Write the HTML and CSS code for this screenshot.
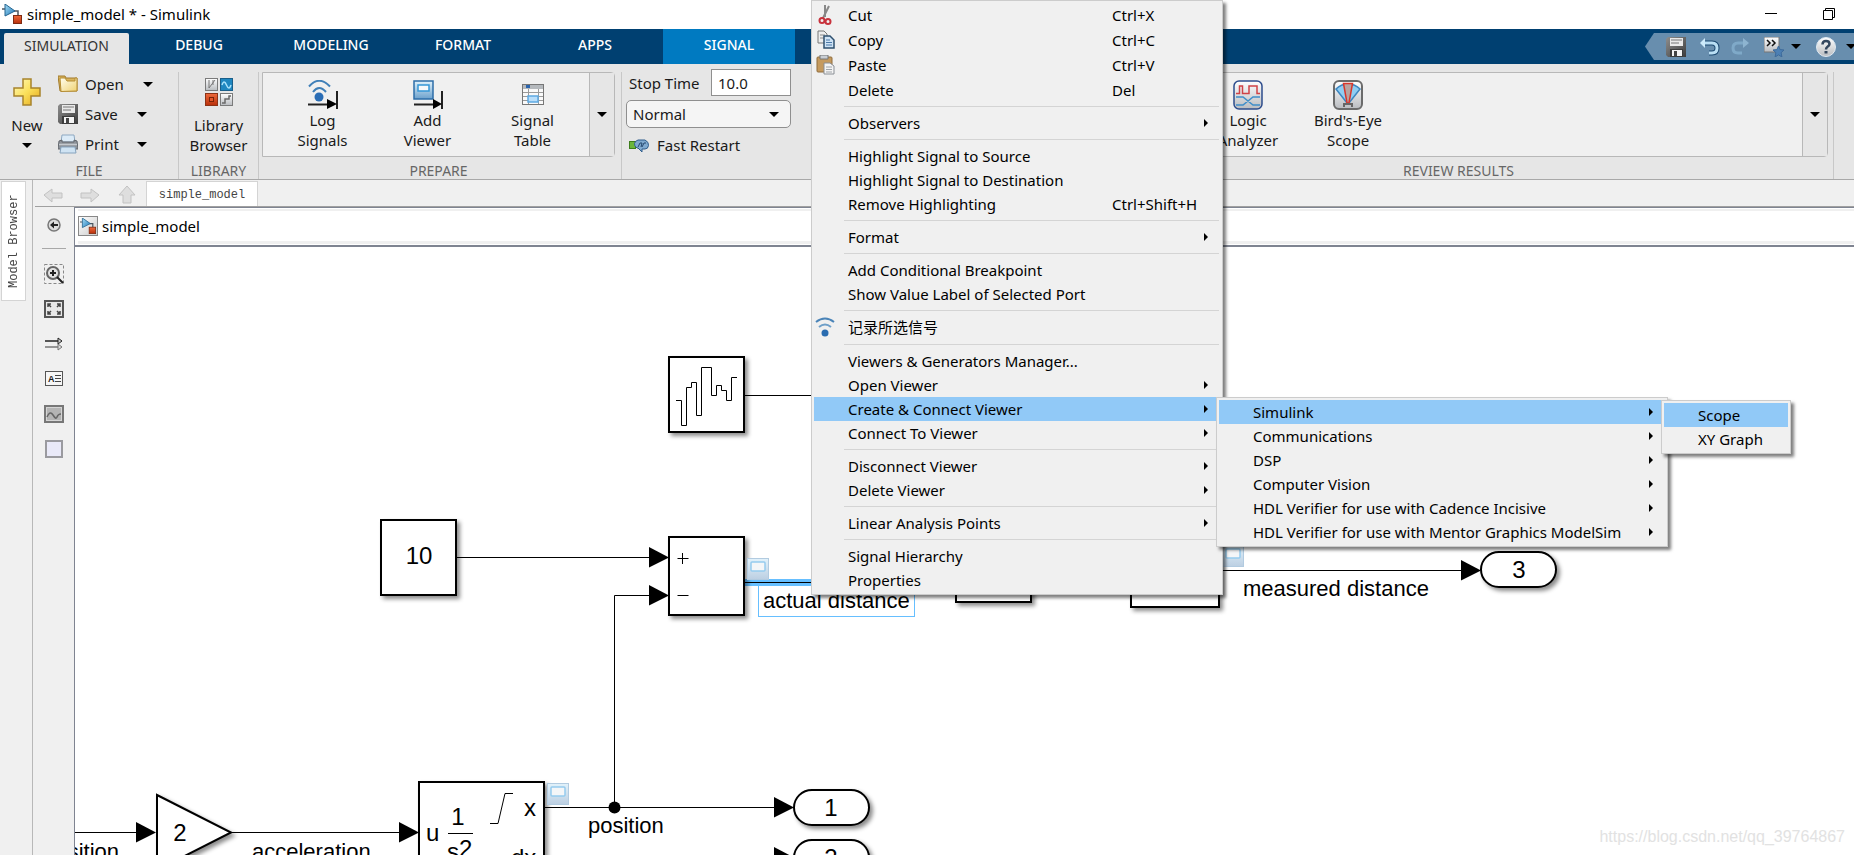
FILE: index.html
```html
<!DOCTYPE html>
<html lang="en">
<head>
<meta charset="utf-8">
<title>simple_model * - Simulink</title>
<link rel="stylesheet" href="styles.css">
</head>
<body>
<svg class="defs" width="0" height="0" aria-hidden="true">
  <defs>
    <linearGradient id="blueG" x1="0" y1="0" x2="1" y2="1"><stop offset="0" stop-color="#a6dcf5"/><stop offset="1" stop-color="#1c78b8"/></linearGradient>
    <linearGradient id="redG" x1="0" y1="0" x2="0" y2="1"><stop offset="0" stop-color="#ee6a3c"/><stop offset="1" stop-color="#b82f0a"/></linearGradient>
    <linearGradient id="goldG" x1="0" y1="0" x2="1" y2="1"><stop offset="0" stop-color="#fffbc0"/><stop offset=".5" stop-color="#fbe05a"/><stop offset="1" stop-color="#e3a51c"/></linearGradient>
    <linearGradient id="folderG" x1="0" y1="0" x2="1" y2="1"><stop offset="0" stop-color="#fffef0"/><stop offset="1" stop-color="#f0d272"/></linearGradient>
    <linearGradient id="greyG" x1="0" y1="0" x2="0" y2="1"><stop offset="0" stop-color="#ffffff"/><stop offset="1" stop-color="#b9bcc0"/></linearGradient>
    <linearGradient id="darkG" x1="0" y1="0" x2="1" y2="1"><stop offset="0" stop-color="#8e8e8e"/><stop offset="1" stop-color="#3c3c3c"/></linearGradient>
    <linearGradient id="paleG" x1="0" y1="0" x2="0" y2="1"><stop offset="0" stop-color="#e2f2fb"/><stop offset="1" stop-color="#bccfe2"/></linearGradient>
    <linearGradient id="viewG" x1="0" y1="0" x2="0" y2="1"><stop offset="0" stop-color="#dff1fb"/><stop offset="1" stop-color="#6ba0cc"/></linearGradient>
    <filter id="shade" x="-20%" y="-20%" width="150%" height="150%"><feDropShadow dx="3" dy="3" stdDeviation="2" flood-color="#000" flood-opacity=".45"/></filter>
    <symbol id="i-save" viewBox="0 0 20 20">
      <path d="M2 0h18v20H2L0 18V2z" fill="url(#darkG)"/>
      <path d="M4 1h13v8H4z" fill="#e9e9e9"/><path d="M5 3h11M5 6h8" stroke="#777"/>
      <path d="M4 12h13v8H4z" fill="#3c3c3c"/><path d="M6 13h10v6H6z" fill="#f4f4f4"/><path d="M8 14h3v5H8z" fill="#444"/>
    </symbol>
    <symbol id="i-model" viewBox="0 0 20 20">
      <path d="M0 5h3M12 7h4v5" fill="none" stroke="#4d565e" stroke-width="1.5"/>
      <path d="M3 0l10 7-10 5z" fill="url(#blueG)" stroke="#24648f"/>
      <rect x="11.500" y="11.500" width="8" height="8" fill="url(#redG)" stroke="#7e2b12"/>
    </symbol>
    <symbol id="i-view" viewBox="0 0 22 22">
      <rect x=".5" y=".5" width="21" height="21" fill="url(#paleG)" stroke="#b2cbe0"/>
      <rect x="4" y="4" width="14" height="9" rx="1" fill="#f4f6f8" stroke="#95cbee" stroke-width="1.500"/>
    </symbol>
    <symbol id="i-wave" viewBox="0 0 20 20">
      <path d="M1 5Q10-2 19 5" fill="none" stroke="#4a84b8" stroke-width="2"/>
      <path d="M4 10Q10 5 16 10" fill="none" stroke="#6e9fc8" stroke-width="2"/>
      <circle cx="10" cy="16" r="3.500" fill="#2a6cb0"/>
    </symbol>
  </defs>
</svg>

<div class="app">
  <header class="titlebar">
    <svg class="title-icon" viewBox="0 0 20 20"><use href="#i-model"/></svg>
    <span class="title">simple_model * - Simulink</span>
    <button class="win" aria-label="Minimize"><svg width="12" height="12"><path d="M0 5.500h12" stroke="#000"/></svg></button>
    <button class="win" aria-label="Restore"><svg width="12" height="12"><path d="M.5 2.500h9v9h-9zM2.500 2.500v-2h9v9h-2" fill="none" stroke="#000"/></svg></button>
  </header>

  <nav class="tabs">
    <button class="tab tab-active">SIMULATION</button>
    <button class="tab">DEBUG</button>
    <button class="tab">MODELING</button>
    <button class="tab">FORMAT</button>
    <button class="tab">APPS</button>
    <button class="tab tab-signal">SIGNAL</button>
    <div class="quick">
      <button class="qa" aria-label="Save"><svg width="20" height="20"><use href="#i-save"/></svg></button>
      <button class="qa qa-undo" aria-label="Undo"><svg width="20" height="20" viewBox="0 0 20 20"><path d="M3 6h9q5 0 5 5t-5 5H9" fill="none" stroke="#1d4a72" stroke-width="5"/><path d="M3 6h9q5 0 5 5t-5 5H9" fill="none" stroke="#b9def4" stroke-width="3"/><path d="M0 6l5-5v10z" fill="#cdeafa"/></svg></button>
      <button class="qa" aria-label="Redo"><svg width="20" height="20" viewBox="0 0 20 20"><path d="M16 6H8q-5 0-5 5t5 5h4" fill="none" stroke="#7fa9c8" stroke-width="3"/><path d="M19 6l-6-5v10z" fill="#8db4d0"/></svg></button>
      <button class="qa qa-fav" aria-label="Favorites"><svg width="20" height="20" viewBox="0 0 20 20"><path d="M0 0h15v15H0z" fill="url(#greyG)" stroke="#777"/><path d="M3 3l3 3-3 3M8 3l3 3-3 3" fill="none" stroke="#111" stroke-width="1.500"/><path d="M14.500 9l1.600 3.600 3.900.4-2.900 2.700.8 4.300-3.400-2.200-3.400 2.200.8-4.300L9 13l3.900-.4z" fill="#4d80b4" stroke="#3d6a9a"/></svg></button>
      <svg class="caret" viewBox="0 0 10 5"><path d="M0 0h10L5 5z"/></svg>
      <button class="qa qa-help" aria-label="Help"><svg width="20" height="20" viewBox="0 0 20 20"><circle cx="10" cy="10" r="9.500" fill="url(#greyG)" stroke="#dfe9f2"/><path d="M6.500 7.500q0-3.500 3.500-3.500t3.500 3q0 1.500-2 2.800-1.500 1-1.500 2.700" fill="none" stroke="#33475e" stroke-width="2.500"/><path d="M8.500 14h3v2.500h-3z" fill="#33475e"/></svg></button>
      <svg class="caret" viewBox="0 0 10 5"><path d="M0 0h10L5 5z"/></svg>
    </div>
  </nav>

  <section class="ribbon">
    <div class="group group-file">
      <div class="group-body">
        <button class="big big-new">
          <svg class="big-icon" viewBox="0 0 28 28"><path d="M10 1h8v9h9v8h-9v9h-8v-9H1v-8h9z" fill="url(#goldG)" stroke="#a8842c" stroke-width="1.500"/></svg>
          <span>New</span>
          <svg class="caret" viewBox="0 0 10 5"><path d="M0 0h10L5 5z"/></svg>
        </button>
        <div class="rows">
          <button class="row-btn row-open"><svg width="20" height="20" viewBox="0 0 20 20"><path d="M0 2h7l1 2h11v13H2z" fill="#d9b45c" stroke="#a27b2c"/><path d="M2 4h5l2 3h8V4h2v13l-16 .5z" fill="url(#folderG)" stroke="#b58d33"/></svg><span>Open</span><svg class="caret" viewBox="0 0 10 5"><path d="M0 0h10L5 5z"/></svg></button>
          <button class="row-btn"><svg width="20" height="20"><use href="#i-save"/></svg><span>Save</span><svg class="caret" viewBox="0 0 10 5"><path d="M0 0h10L5 5z"/></svg></button>
          <button class="row-btn"><svg width="20" height="20" viewBox="0 0 20 20"><path d="M4 1h12l1 7H3z" fill="#dcebf7" stroke="#8ea9c2"/><path d="M1 7l3-1v2h12V6l3 1 1 8H0z" fill="#8d9299" stroke="#62676d"/><path d="M1 10.500h18" stroke="#c5c9ce" stroke-width="1.500"/><path d="M3 13h14l1 6H2z" fill="#cfe3f3" stroke="#86a3bd"/></svg><span>Print</span><svg class="caret" viewBox="0 0 10 5"><path d="M0 0h10L5 5z"/></svg></button>
        </div>
      </div>
      <h2 class="group-name">FILE</h2>
    </div>

    <div class="group group-library">
      <div class="group-body">
        <button class="big">
          <svg class="big-icon" viewBox="0 0 28 28">
            <rect x=".5" y=".5" width="12" height="12" fill="url(#greyG)" stroke="#7b7b7b"/><path d="M4 2v8l6-8M8 2v5" fill="none" stroke="#777"/>
            <rect x="15.500" y=".5" width="12" height="12" fill="#1f87c0" stroke="#1a5f8a"/><path d="M17 7q2-6 4.500 0t4.500 0" fill="none" stroke="#a9e2fb" stroke-width="1.500"/>
            <rect x=".5" y="15.500" width="12" height="12" fill="url(#redG)" stroke="#8c3216"/><rect x="4.500" y="19.500" width="4" height="4" fill="#e5562a" stroke="#7a2408"/>
            <rect x="15.500" y="15.500" width="12" height="12" fill="url(#greyG)" stroke="#7b7b7b"/><path d="M17 25h3v-4h4v-3h2" fill="none" stroke="#6a6a6a" stroke-width="1.500"/>
          </svg>
          <span>Library<br>Browser</span>
        </button>
      </div>
      <h2 class="group-name">LIBRARY</h2>
    </div>

    <div class="group group-prepare">
      <div class="gallery">
        <div class="gallery-items">
          <button class="item">
            <svg class="item-icon" viewBox="0 0 30 30"><path d="M1 6.500Q11-5 22 6.500M5 12Q11 4 18 12" fill="none" stroke="#3f7fb8" stroke-width="2"/><circle cx="11" cy="17" r="4.500" fill="#2a6db5"/><path d="M0 24.500h21M29 11v18" stroke="#222" stroke-width="2"/><path d="M19 19l10 5-10 5z"/></svg>
            <span>Log<br>Signals</span>
          </button>
          <button class="item">
            <svg class="item-icon" viewBox="0 0 30 30"><rect x="1" y="1" width="19" height="18" fill="url(#viewG)" stroke="#2d6da8" stroke-width="1.500"/><rect x="5" y="5" width="11" height="6" fill="#f6f8fa" stroke="#3497d6" stroke-width="1.500"/><path d="M1 24.500h20M29 11v18" stroke="#222" stroke-width="2"/><path d="M20 19l9 5-9 5z"/></svg>
            <span>Add<br>Viewer</span>
          </button>
          <button class="item">
            <svg class="item-icon" viewBox="0 0 30 30"><rect x="4.500" y="4.500" width="21" height="20" fill="#fafafa" stroke="#777"/><path d="M5 5h20v4H5z" fill="#b5b9bd"/><rect x="8" y="5" width="4" height="3" fill="#2b64ad"/><path d="M5 12.500h20M5 16.500h20M5 20.500h20M10.500 9v15M20.500 9v15" stroke="#9b9b9b"/><rect x="10" y="16" width="10" height="6" fill="#b9defa" stroke="#5da9e2" stroke-width="1.500"/></svg>
            <span>Signal<br>Table</span>
          </button>
        </div>
        <button class="gallery-more" aria-label="More apps"><svg class="caret" viewBox="0 0 10 5"><path d="M0 0h10L5 5z"/></svg></button>
      </div>
      <h2 class="group-name">PREPARE</h2>
    </div>

    <div class="group group-simulate">
      <div class="group-body">
        <div class="form">
          <div class="field"><label for="stop">Stop Time</label><input id="stop" type="text" value="10.0"></div>
          <div class="pick"><select aria-label="Simulation mode"><option>Normal</option></select><svg class="caret" viewBox="0 0 10 5"><path d="M0 0h10L5 5z"/></svg></div>
          <button class="restart"><svg width="20" height="16" viewBox="0 0 20 16"><rect x=".5" y="4.500" width="6" height="7" fill="#6bb53b" stroke="#3d7d1c"/><path d="M9 3h7q4 2 3.500 5.500T16 12h-3v3l-4-4H8q-3-2-2.500-4.500T9 3z" fill="#7fa9cf" stroke="#2f5d8c"/><path d="M9 10l2-4h2l-1 4M13 10l2-4h2" fill="none" stroke="#24486f"/></svg><span>Fast Restart</span></button>
        </div>
        <button class="big big-step"><span class="big-icon"></span><span>Step<br>Back</span></button>
      </div>
    </div>

    <div class="group group-review">
      <div class="gallery">
        <div class="gallery-items">
          <button class="item"><span class="item-icon"></span><span>Data<br>Inspector</span></button>
          <button class="item">
            <svg class="item-icon" viewBox="0 0 30 30"><rect x="1" y="1" width="28" height="28" rx="5" fill="url(#greyG)" stroke="#2d4c8c" stroke-width="1.500"/><path d="M3 13.500h3.500V6h3v7.500H16V6h8v7.500h3" fill="none" stroke="#cf4347" stroke-width="1.500"/><path d="M3 17h7l10 8h7M3 25h7l10-8h7" fill="none" stroke="#3f8ec9" stroke-width="1.500"/></svg>
            <span>Logic<br>Analyzer</span>
          </button>
          <button class="item">
            <svg class="item-icon" viewBox="0 0 30 30"><rect x="1" y="1" width="28" height="28" rx="5" fill="url(#greyG)" stroke="#6b6b6b" stroke-width="2"/><path d="M3 9q5-5 12-5t12 5L16 23h-2z" fill="#8fcdf2" stroke="#3d86c0" stroke-width="1.500"/><path d="M10.500 3.500h9L16 23h-2z" fill="#b9a3a0" stroke="#d8362c" stroke-width="1.500"/><path d="M11 27v-3h8v3" fill="none" stroke="#666" stroke-width="2"/></svg>
            <span>Bird's-Eye<br>Scope</span>
          </button>
        </div>
        <button class="gallery-more" aria-label="More results apps"><svg class="caret" viewBox="0 0 10 5"><path d="M0 0h10L5 5z"/></svg></button>
      </div>
      <h2 class="group-name">REVIEW RESULTS</h2>
    </div>
    <div class="ribbon-end"></div>
  </section>

  <main class="work">
    <aside class="side"><button class="side-tab">Model Browser</button></aside>
    <div class="editor">
      <div class="navbar">
        <button class="nav" aria-label="Back"><svg width="20" height="20" viewBox="0 0 20 20"><path d="M1 10l8-6v4h10v5H9v4z" fill="#dedede" stroke="#c2c2c2"/></svg></button>
        <button class="nav" aria-label="Forward"><svg width="20" height="20" viewBox="0 0 20 20"><path d="M19 10l-8-6v4H1v5h10v4z" fill="#dedede" stroke="#c2c2c2"/></svg></button>
        <button class="nav" aria-label="Up"><svg width="20" height="20" viewBox="0 0 20 20"><path d="M10 1l8 9h-4v8H6v-8H2z" fill="#dedede" stroke="#c2c2c2"/></svg></button>
        <button class="doc-tab">simple_model</button>
      </div>
      <div class="body">
        <div class="palette">
          <button class="tool tool-back" aria-label="Hide palette"><svg width="20" height="20" viewBox="0 0 20 20"><circle cx="10" cy="10" r="6" fill="#ddd" stroke="#777" stroke-width="1.500"/><path d="M6 10l4-3.500v2.500h4v2h-4v2.500z" fill="#222"/></svg></button>
          <span class="palette-sep"></span>
          <button class="tool" aria-label="Zoom"><svg width="20" height="20" viewBox="0 0 20 20"><rect x=".5" y=".5" width="19" height="19" fill="none" stroke="#888" stroke-dasharray="3 2"/><circle cx="9" cy="9" r="6" fill="#e2e2e2" stroke="#666" stroke-width="2"/><path d="M6 9h6M9 6v6M13 13l6 6" stroke="#222" stroke-width="2"/></svg></button>
          <button class="tool" aria-label="Fit to view"><svg width="20" height="18" viewBox="0 0 20 18"><rect x="1" y="1" width="18" height="16" fill="#e8e8e8" stroke="#555" stroke-width="2"/><path d="M4 7V4h3M13 4h3v3M4 11v3h3M13 14h3v-3M4 4l3 3M16 4l-3 3M4 14l3-3M16 14l-3-3" fill="none" stroke="#444" stroke-width="1.500"/></svg></button>
          <button class="tool" aria-label="Sample time"><svg width="20" height="14" viewBox="0 0 20 14"><path d="M1 4h13" stroke="#222" stroke-width="1.500"/><path d="M14 1l4 3-4 3z" fill="#ccc" stroke="#222"/><path d="M1 10h13" stroke="#777" stroke-width="1.500"/><path d="M14 7l4 3-4 3z" fill="#ddd" stroke="#777"/></svg></button>
          <button class="tool" aria-label="Annotation"><span class="note-icon"><b>A</b><svg width="6" height="7"><path d="M0 .5h6M0 3.500h6M0 6.500h6" stroke="#444"/></svg></span></button>
          <button class="tool" aria-label="Image"><svg width="20" height="18" viewBox="0 0 20 18"><rect x="1" y="1" width="18" height="16" fill="#d5d5d5" stroke="#777" stroke-width="2"/><rect x="3" y="3" width="14" height="12" fill="#b4b4b4"/><path d="M3 12q3-7 6-2t4 2 4-3" fill="none" stroke="#666" stroke-width="1.500"/></svg></button>
          <button class="tool" aria-label="Area"><svg width="18" height="18"><rect x="1" y="1" width="16" height="16" fill="#e9e9f8" stroke="#9a9a9f" stroke-width="2"/></svg></button>
        </div>
        <div class="stage">
          <div class="crumbs">
            <div class="crumb-field"><span class="crumb-icon"><svg width="16" height="16"><use href="#i-model"/></svg></span><span>simple_model</span></div>
          </div>
          <svg class="canvas" role="img" aria-label="Block diagram">
            <g transform="translate(-75 -247)">
              <g class="wire">
                <path d="M745 395.500H830M457 557.500H650M650 595.500H614.500V807.500M545 807.500H776M75 832.500H138M232 832.500H400M1200 570.500H1462"/>
              </g>
              <path d="M745 582.500H830" class="wire-selected"/><path class="wire" d="M745 582.500H830"/>
              <g class="arrows">
                <path d="M649 547l20 10.500-20 10z"/><path d="M649 585l20 10.500-20 10z"/>
                <path d="M774 797l20 10.500-20 10z"/><path d="M774 847l20 10.500-20 10z"/>
                <path d="M136 822l20 10.500-20 10z"/><path d="M399 822l20 10.500-20 10z"/>
                <path d="M1461 560l20 10.500-20 10z"/>
                <circle cx="614.500" cy="807.500" r="6"/>
              </g>
              <g class="block">
                <rect x="669" y="357" width="75" height="75"/>
                <rect x="381" y="520" width="75" height="75"/>
                <rect x="669" y="537" width="75" height="78"/>
                <rect x="419" y="782" width="125" height="120"/>
                <rect x="956" y="540" width="75" height="62"/>
                <rect x="1131" y="540" width="88" height="67"/>
                <path d="M157 795L231 832.500 157 870z"/>
                <rect x="1481" y="552" width="75" height="35" rx="18"/>
                <rect x="794" y="790" width="75" height="35" rx="18"/>
                <rect x="794" y="840" width="75" height="35" rx="18"/>
              </g>
              <path class="wire" d="M676 400.500H681.500V425.500H686.500V387.500H691.500V382.500H696.500V415.500H701.500V367.500H711.500V395.500H716.500V385.500H721.500V390.500H726.500V400.500H731.500V377.500H737"/>
              <path class="wire" d="M677.500 558.500h11M682.500 553v11M677.500 595.500h11M448 833.500h25M490 823.500h8L505 793.500h8"/>
              <use href="#i-view" x="747" y="558" width="22" height="22"/>
              <use href="#i-view" x="547" y="783" width="22" height="22"/>
              <use href="#i-view" x="1222" y="545" width="22" height="22"/>
              <rect x="758.500" y="585.500" width="156" height="31" fill="none" stroke="#66bfff"/>
              <g class="value">
                <text x="419" y="564" text-anchor="middle">10</text>
                <text x="1519" y="578" text-anchor="middle">3</text>
                <text x="831" y="816" text-anchor="middle">1</text>
                <text x="831" y="866" text-anchor="middle">2</text>
                <text x="180" y="841" text-anchor="middle">2</text>
                <text x="426" y="841">u</text>
                <text x="458" y="825" text-anchor="middle">1</text>
                <text x="447" y="860">s</text><text x="459" y="857">2</text>
                <text x="524" y="816">x</text><text x="511" y="866">dx</text>
              </g>
              <g class="label">
                <text x="763" y="608">actual distance</text>
                <text x="1243" y="596">measured distance</text>
                <text x="588" y="833">position</text>
                <text x="252" y="859">acceleration</text>
                <text x="119" y="859" text-anchor="end">sition</text>
              </g>
            </g>
          </svg>
          <span class="watermark">https://blog.csdn.net/qq_39764867</span>
        </div>
      </div>
    </div>
  </main>

  <ul class="menu menu-main">
    <li class="mi mi-icon"><svg class="mi-ic" viewBox="0 0 20 20"><path d="M10 0v12M14 1L8 13" stroke="#888" stroke-width="2"/><circle cx="7" cy="15.500" r="2.500" fill="none" stroke="#c8323c" stroke-width="2"/><circle cx="13" cy="16.500" r="2.500" fill="none" stroke="#c8323c" stroke-width="2"/></svg><button>Cut</button><kbd>Ctrl+X</kbd></li>
    <li class="mi mi-icon"><svg class="mi-ic" viewBox="0 0 20 20"><path d="M3 1h6l3 3v9H3z" fill="#eee" stroke="#777"/><path d="M5 5h5M5 8h5" stroke="#888"/><path d="M9 6h6l4 4v8H9z" fill="#cfe3f5" stroke="#2f506f" stroke-width="1.500"/><path d="M11 10h4M11 12.500h6M11 15h6" stroke="#4a78a8"/></svg><button>Copy</button><kbd>Ctrl+C</kbd></li>
    <li class="mi mi-icon"><svg class="mi-ic" viewBox="0 0 20 20"><rect x="2" y="2" width="15" height="15" rx="1" fill="#c59a5e" stroke="#8f6d3c"/><path d="M5 0h8v4H5z" fill="#c9ced4" stroke="#777"/><path d="M9 8h6l4 3v8H9z" fill="#f3f3f3" stroke="#8a8f95"/><path d="M11 12h6M11 14.500h6M11 17h6" stroke="#a0a5aa"/></svg><button>Paste</button><kbd>Ctrl+V</kbd></li>
    <li class="mi"><button>Delete</button><kbd>Del</kbd></li>
    <li class="sep"></li>
    <li class="mi mi-sub"><button>Observers</button></li>
    <li class="sep"></li>
    <li class="mi"><button>Highlight Signal to Source</button></li>
    <li class="mi"><button>Highlight Signal to Destination</button></li>
    <li class="mi"><button>Remove Highlighting</button><kbd>Ctrl+Shift+H</kbd></li>
    <li class="sep"></li>
    <li class="mi mi-sub"><button>Format</button></li>
    <li class="sep"></li>
    <li class="mi"><button>Add Conditional Breakpoint</button></li>
    <li class="mi"><button>Show Value Label of Selected Port</button></li>
    <li class="sep"></li>
    <li class="mi mi-icon"><svg class="mi-ic" viewBox="0 0 20 20"><use href="#i-wave"/></svg><button lang="zh">记录所选信号</button></li>
    <li class="sep"></li>
    <li class="mi"><button>Viewers &amp; Generators Manager...</button></li>
    <li class="mi mi-sub"><button>Open Viewer</button></li>
    <li class="mi mi-sub mi-on"><button>Create &amp; Connect Viewer</button>
      <ul class="menu submenu submenu-lib">
        <li class="mi mi-sub mi-on"><button>Simulink</button>
          <ul class="menu submenu submenu-scope">
            <li class="mi mi-on"><button>Scope</button></li>
            <li class="mi"><button>XY Graph</button></li>
          </ul>
        </li>
        <li class="mi mi-sub"><button>Communications</button></li>
        <li class="mi mi-sub"><button>DSP</button></li>
        <li class="mi mi-sub"><button>Computer Vision</button></li>
        <li class="mi mi-sub"><button>HDL Verifier for use with Cadence Incisive</button></li>
        <li class="mi mi-sub"><button>HDL Verifier for use with Mentor Graphics ModelSim</button></li>
      </ul>
    </li>
    <li class="mi mi-sub"><button>Connect To Viewer</button></li>
    <li class="sep"></li>
    <li class="mi mi-sub"><button>Disconnect Viewer</button></li>
    <li class="mi mi-sub"><button>Delete Viewer</button></li>
    <li class="sep"></li>
    <li class="mi mi-sub"><button>Linear Analysis Points</button></li>
    <li class="sep"></li>
    <li class="mi"><button>Signal Hierarchy</button></li>
    <li class="mi"><button>Properties</button></li>
  </ul>
</div>
</body>
</html>
```
FILE: styles.css
```css
* { box-sizing: border-box; }

body {
  margin: 0;
  font: 15px/20px "Noto Sans", "Noto Sans CJK SC", sans-serif;
  color: #1a1a1a;
  background: #fff;
}

button, input, select { font: inherit; color: inherit; }
button { padding: 0; border: 0; background: none; }
svg { display: block; flex: none; }
.defs { position: absolute; }

.app {
  position: relative;
  display: flex;
  flex-direction: column;
  height: 100vh;
  overflow: hidden;
}

.caret { width: 10px; height: 5px; fill: #000; }

/* Title bar */
.titlebar {
  display: flex;
  align-items: center;
  height: 29px;
  padding: 0 19px 1px 2px;
  flex: none;
  color: #000;
}
.title-icon { width: 20px; height: 20px; margin-right: 5px; }
.title { flex: 1; }
.win { margin-left: 46px; }

/* Tab strip */
.tabs {
  display: flex;
  align-items: flex-end;
  height: 35px;
  padding-left: 4px;
  flex: none;
  background: #004071;
  font-size: 14px;
}
.tab { width: 132px; height: 35px; padding-bottom: 3px; color: #fff; font-weight: 500; }
.tab-active {
  width: 125px;
  height: 31px;
  margin-right: 4px;
  padding-bottom: 6px;
  border-radius: 2px 2px 0 0;
  background: #e6e6e6;
  color: #333;
  font-weight: 400;
}
.tab-signal { margin-left: 2px; background: #007ac1; }
.quick {
  display: flex;
  align-items: center;
  align-self: flex-start;
  height: 27px;
  margin: 4px 0 0 auto;
  padding-left: 21px;
  background: #688eae;
  clip-path: polygon(0 50%, 9px 0, 100% 0, 100% 100%, 9px 100%);
}
.quick .caret { margin-right: 15px; }
.quick .caret:last-child { margin-right: -2px; }
.qa { margin-right: 14px; }
.qa-undo { margin-right: 10px; }
.qa-fav { margin-right: 7px; }
.qa-help { margin-right: 10px; }

/* Ribbon */
.ribbon {
  display: flex;
  height: 116px;
  padding-top: 8px;
  flex: none;
  background: #e6e6e6;
  border-bottom: 1px solid #a8a8a8;
}
.group {
  display: flex;
  flex-direction: column;
  height: 107px;
  border-right: 1px solid #c8c8c8;
}
.group-file { width: 179px; }
.group-library { width: 80px; }
.group-prepare { width: 363px; padding: 0 6px 0 3px; }
.group-simulate { width: 463px; }
.group-review { flex: 1; padding: 0 5px 0 12px; }
.ribbon-end { width: 20px; }
.group-name {
  margin: auto 0 0;
  font-size: 14px;
  font-weight: 400;
  line-height: 16px;
  text-align: center;
  color: #666;
}
.group-review .group-name { padding-right: 8px; }
.group-body { display: flex; height: 88px; }
.big { display: flex; flex-direction: column; align-items: center; width: 100%; padding-top: 6px; }
.big-icon { width: 28px; height: 28px; margin-bottom: 9px; }
.big-new { width: 54px; }
.big .caret { margin-top: 8px; }
.big-step { width: 40px; margin-left: 27px; }
.rows { display: flex; flex-direction: column; margin-top: -3px; }
.row-btn { display: flex; align-items: center; height: 30px; padding-left: 4px; }
.row-btn span { width: 52px; margin-left: 7px; text-align: left; }
.row-open span { width: 58px; }

.gallery {
  display: flex;
  height: 85px;
  border: 1px solid #b8b8b8;
  border-radius: 0 4px 4px 0;
  background: #f0f0f0;
}
.gallery-items { display: flex; flex: 1; padding-left: 7px; }
.group-review .gallery-items { padding-left: 0; }
.item { display: flex; flex-direction: column; align-items: center; width: 105px; padding-top: 7px; }
.group-review .item { width: 100px; }
.item-icon { width: 30px; height: 30px; }
.gallery-more {
  display: flex;
  align-items: center;
  justify-content: center;
  width: 25px;
  border-left: 1px solid #b8b8b8;
  background: #e6e6e6;
}

.form { width: 169px; padding-left: 4px; margin-top: -3px; }
.field { display: flex; align-items: center; justify-content: space-between; margin-left: 3px; }
.field input { width: 80px; height: 27px; padding: 0 6px; border: 1px solid #8f8f8f; background: #fff; }
.pick { position: relative; margin: 4px 0 7px; }
.pick select {
  width: 100%;
  height: 28px;
  padding: 0 6px;
  border: 1px solid #8f8f8f;
  border-radius: 5px;
  background: #f5f5f5;
  appearance: none;
}
.pick .caret { position: absolute; right: 12px; top: 12px; }
.restart { display: flex; align-items: center; margin-left: 3px; }
.restart span { margin-left: 8px; }

/* Work area */
.work { display: flex; flex: 1; min-height: 0; background: #f0f0f0; }
.side { width: 33px; padding: 1px; border-right: 1px solid #b8b8b8; }
.side-tab, .doc-tab {
  font: 12px/20px "Liberation Mono", monospace;
  color: #444;
  background: #fff;
  border: 1px solid #d4d4d4;
}
.side-tab { width: 25px; height: 120px; writing-mode: vertical-rl; transform: rotate(180deg); }
.editor { display: flex; flex-direction: column; flex: 1; min-width: 0; padding-left: 2px; }
.navbar { display: flex; align-items: flex-end; height: 27px; flex: none; border-bottom: 1px solid #a0a0a0; padding: 0 8px; }
.nav { margin: 0 17px 1px 0; }
.doc-tab { width: 112px; height: 25px; margin-left: -8px; border-bottom: 0; padding-top: 2px; }
.body { display: flex; flex: 1; min-height: 0; }
.palette { display: flex; flex-direction: column; align-items: center; width: 39px; padding-right: 1px; }
.tool { display: flex; align-items: center; justify-content: center; width: 24px; height: 35px; }
.palette-sep { width: 24px; height: 1px; margin: 6px 0 7px; background: #a8a8a8; }
.note-icon {
  display: flex;
  align-items: center;
  justify-content: space-between;
  width: 18px;
  height: 15px;
  padding: 0 2px;
  border: 1px solid #555;
  background: #f6f6f6;
  font: 9px/12px "Liberation Sans", sans-serif;
}
.stage { position: relative; display: flex; flex-direction: column; flex: 1; min-width: 0; border-left: 1px solid #7f8491; border-top: 1px solid #7f8491; background: #fff; }
.crumbs { padding: 1px 0 1px 3px; border-bottom: 2px solid #7f8491; background: #fff; color: #000; }
.crumb-field { display: flex; align-items: center; height: 35px; border: solid #f0f0f0; border-width: 2px 0 3px; }
.crumb-icon { display: flex; padding: 1px; margin-right: 4px; border: 1px solid #888; background: linear-gradient(135deg, #fff, #ccc); }
.canvas { width: 100%; flex: 1; min-height: 0; }
.watermark { position: absolute; right: 9px; bottom: 8px; font: 16px/20px "Liberation Sans", Arial, sans-serif; color: #e2e2e2; }

.wire { fill: none; stroke: #000; stroke-width: 1; }
.wire-selected { fill: none; stroke: #66bfff; stroke-width: 7; }
.block { fill: #fff; stroke: #000; stroke-width: 2; filter: url(#shade); }
.value, .label { font-family: "Liberation Sans", Arial, sans-serif; font-size: 24px; fill: #000; }
.label { font-size: 22px; }

/* Context menus */
.menu {
  position: absolute;
  z-index: 2;
  margin: 0;
  padding: 2px;
  list-style: none;
  border: 1px solid #ccc;
  background: #f0f0f0;
  box-shadow: 3px 3px 3px rgba(0, 0, 0, .5);
  color: #000;
}
.menu-main { left: 811px; top: 0; width: 412px; }
.submenu { top: 0; left: calc(100% - 4px); }
.submenu-lib { width: 452px; }
.submenu-scope { width: 130px; }
.mi { position: relative; display: flex; align-items: center; height: 24px; padding-left: 34px; }
.mi-icon { height: 25px; padding-bottom: 1px; }
.mi button { margin-right: auto; white-space: nowrap; }
.mi-ic { width: 20px; height: 20px; margin: 0 13px 0 -33px; }
.mi kbd { width: 108px; font: inherit; }
.mi-on { background: #91c9f7; }
.mi-sub::after {
  content: "";
  margin-right: 12px;
  border: solid transparent;
  border-width: 4px 0 4px 4px;
  border-left-color: #000;
}
.sep { height: 1px; margin: 4px 1px 4px 30px; background: #d4d4d4; }
```
